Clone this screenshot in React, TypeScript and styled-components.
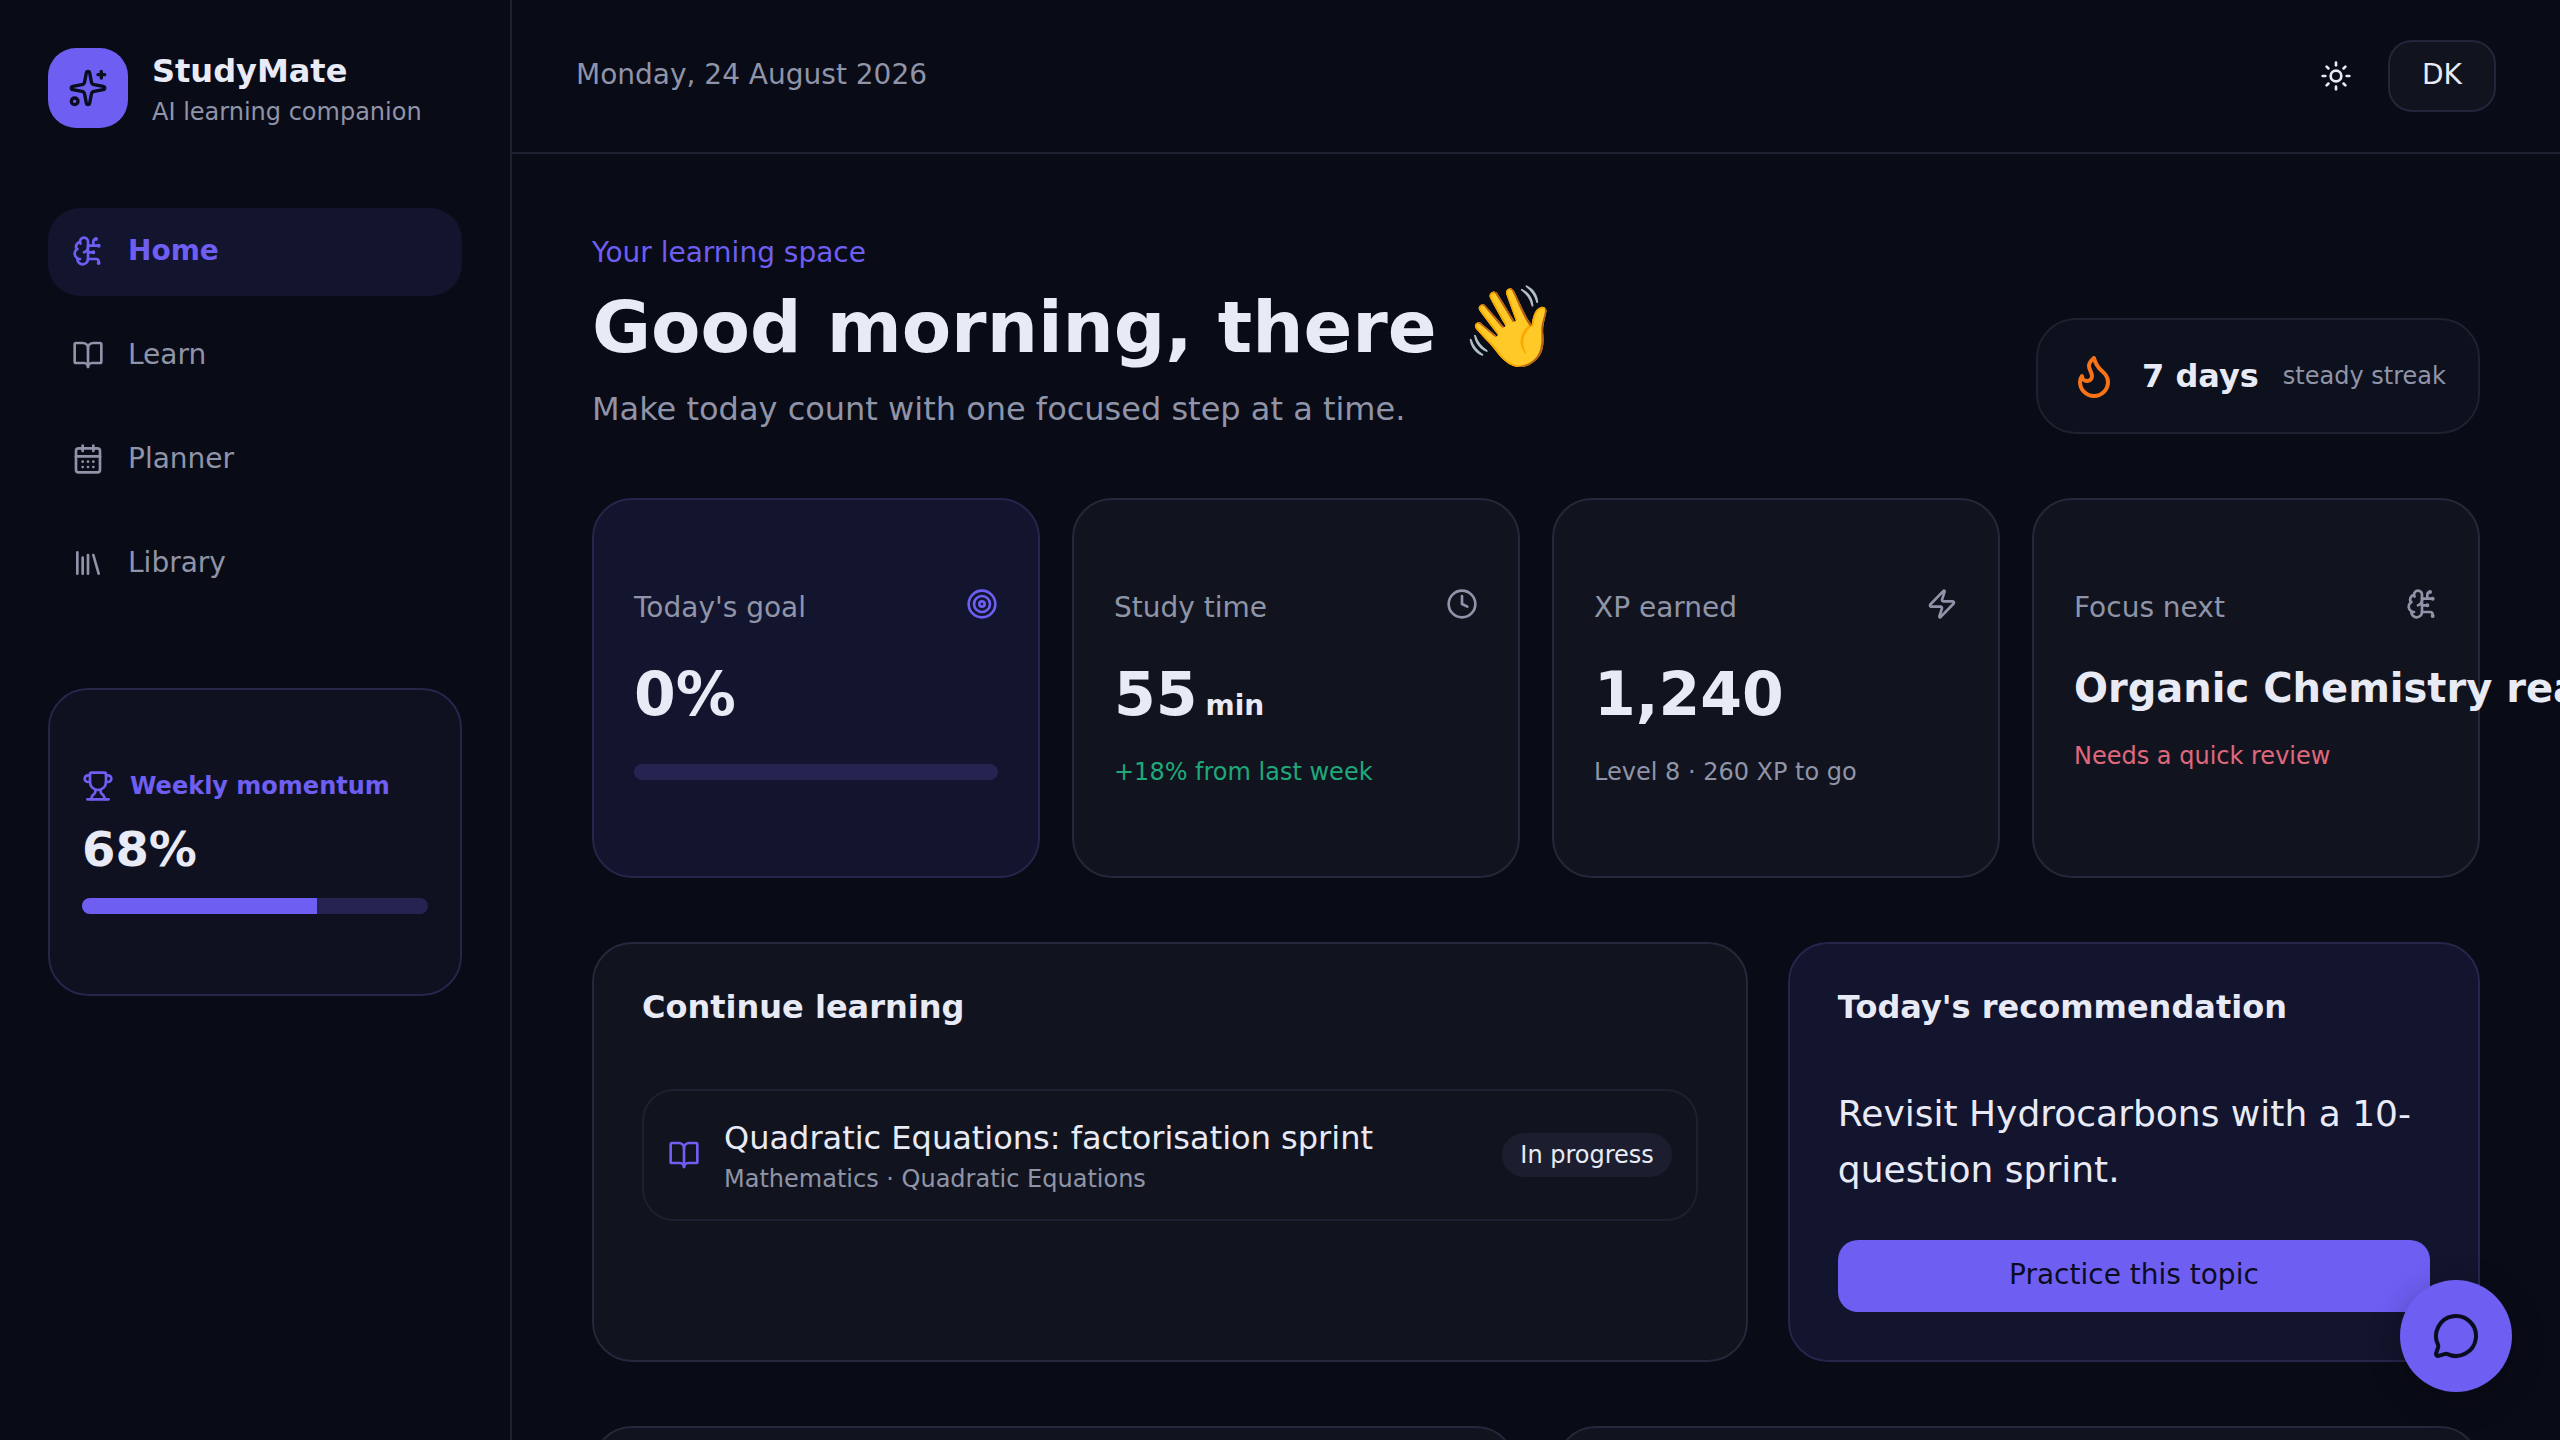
import { ReactNode } from 'react'
import styled, { createGlobalStyle } from 'styled-components'
import {
  BookOpen,
  BrainCircuit,
  CalendarDays,
  Clock,
  Flame,
  Library,
  MessageCircle,
  Sparkles,
  Sun,
  Target,
  Trophy,
  Zap
} from 'lucide-react'

const primary = '#6e5ef2'
const ink = '#e8eaf6'
const muted = '#9094a8'
const line = '#1e2130'
const cardBg = '#11141f'
const cardLine = '#25283a'
const accentBg = '#13142d'
const accentLine = '#25264a'

const GlobalStyle = createGlobalStyle`
  * { box-sizing: border-box; }
  html, body { margin: 0; height: 100%; background: #090b17; overflow: hidden; }
  body { font-family: 'DejaVu Sans', 'Noto Color Emoji', sans-serif; color: ${ink}; }
`

const Shell = styled.div`
  display: flex;
  width: 2560px;
  height: 1440px;
  overflow: hidden;
`

const Sidebar = styled.aside`
  flex: 0 0 512px;
  padding: 48px;
  border-right: 2px solid ${line};
  display: flex;
  flex-direction: column;
`

const Brand = styled.div`
  display: flex;
  align-items: center;
  gap: 24px;
  height: 80px;
  margin-bottom: 80px;
`

const LogoMark = styled.div`
  width: 80px;
  height: 80px;
  border-radius: 28px;
  background: ${primary};
  color: #0b0d1e;
  display: flex;
  align-items: center;
  justify-content: center;
`

const BrandText = styled.div`
  padding-top: 8px;
`

const BrandName = styled.div`
  font-size: 32px;
  font-weight: 700;
  line-height: 40px;
`

const BrandTag = styled.div`
  font-size: 24px;
  line-height: 43px;
  color: ${muted};
`

const Nav = styled.nav`
  display: flex;
  flex-direction: column;
  gap: 16px;
`

const NavItem = styled.div<{ $active?: boolean }>`
  height: 88px;
  padding: 0 24px 3px;
  display: flex;
  align-items: center;
  gap: 24px;
  border-radius: 32px;
  font-size: 28px;
  font-weight: ${({ $active }) => ($active ? 700 : 400)};
  color: ${({ $active }) => ($active ? primary : muted)};
  background: ${({ $active }) => ($active ? accentBg : 'transparent')};
`

const Momentum = styled.div`
  margin-top: 80px;
  height: 308px;
  padding: 80px 32px 0;
  border: 2px solid ${accentLine};
  border-radius: 40px;
  background: #0f1120;
`

const MomentumHead = styled.div`
  display: flex;
  align-items: center;
  gap: 16px;
  font-size: 24px;
  font-weight: 700;
  color: ${primary};
`

const MomentumValue = styled.div`
  font-size: 48px;
  font-weight: 700;
  line-height: 58px;
  margin: 18px 0 20px;
`

const Track = styled.div`
  height: 16px;
  border-radius: 8px;
  background: #252350;
  overflow: hidden;
`

const StatTrack = styled(Track)`
  margin-top: 34px;
`

const Fill = styled.div`
  height: 100%;
  background: ${primary};
`

const Main = styled.div`
  flex: 1;
  min-width: 0;
  display: flex;
  flex-direction: column;
`

const TopBar = styled.header`
  flex: 0 0 154px;
  padding: 40px 64px;
  border-bottom: 2px solid ${line};
  display: flex;
  align-items: center;
  justify-content: space-between;
`

const DateText = styled.div`
  font-size: 28px;
  padding-bottom: 3px;
  color: ${muted};
`

const TopActions = styled.div`
  display: flex;
  align-items: center;
  gap: 36px;
`

const ThemeButton = styled.div`
  display: flex;
  color: ${ink};
`

const Avatar = styled.div`
  width: 108px;
  height: 72px;
  padding-bottom: 3px;
  border-radius: 24px;
  border: 2px solid #23263a;
  background: ${cardBg};
  display: flex;
  align-items: center;
  justify-content: center;
  font-size: 28px;
`

const Content = styled.main`
  padding: 80px;
`

const Hero = styled.section`
  display: flex;
  align-items: flex-end;
  justify-content: space-between;
  margin-bottom: 64px;
`

const Eyebrow = styled.div`
  font-size: 28px;
  line-height: 38px;
  color: ${primary};
`

const Title = styled.h1`
  margin: 5px 0 8px;
  font-size: 72px;
  line-height: 100px;
  font-weight: 700;

  span {
    font-size: 79px;
    line-height: 0;
    vertical-align: -2px;
  }
`

const Subtitle = styled.p`
  margin: 0;
  font-size: 32px;
  line-height: 49px;
  color: ${muted};
`

const Streak = styled.div`
  width: 444px;
  height: 116px;
  padding: 0 32px;
  display: flex;
  align-items: center;
  border: 2px solid ${line};
  border-radius: 40px;
  background: #0d101d;
`

const StreakIcon = styled.div`
  display: flex;
  color: #f97316;
  margin-right: 24px;
`

const StreakDays = styled.div`
  font-size: 32px;
  font-weight: 700;
  margin-right: 24px;
`

const StreakNote = styled.div`
  font-size: 24px;
  color: ${muted};
`

const Stats = styled.section`
  display: grid;
  grid-template-columns: repeat(4, minmax(0, 1fr));
  gap: 32px;
  margin-bottom: 64px;
`

const StatCard = styled.div<{ $accent?: boolean }>`
  height: 380px;
  padding: 88px 40px 0;
  border: 2px solid ${({ $accent }) => ($accent ? accentLine : cardLine)};
  border-radius: 40px;
  background: ${({ $accent }) => ($accent ? accentBg : cardBg)};
`

const StatHead = styled.div<{ $accent?: boolean }>`
  display: flex;
  align-items: flex-start;
  justify-content: space-between;
  font-size: 28px;
  line-height: 40px;
  color: ${muted};
  margin-bottom: 30px;

  svg {
    color: ${({ $accent }) => ($accent ? primary : muted)};
  }
`

const StatValue = styled.div`
  font-size: 60px;
  font-weight: 700;
  line-height: 72px;
  margin-bottom: 25px;
  white-space: nowrap;

  small {
    font-size: 28px;
    line-height: 0;
    margin-left: 8px;
  }
`

const StatTitle = styled.div`
  font-size: 40px;
  font-weight: 700;
  line-height: 60px;
  margin-bottom: 21px;
  white-space: nowrap;
`

const StatNote = styled.div<{ $tone?: string }>`
  font-size: 24px;
  line-height: 34px;
  color: ${({ $tone }) => $tone || muted};
`

const Middle = styled.section`
  display: grid;
  grid-template-columns: 1.67fr 1fr;
  gap: 40px;
  margin-bottom: 64px;
`

const Panel = styled.div<{ $accent?: boolean }>`
  height: 420px;
  padding: 48px;
  border: 2px solid ${({ $accent }) => ($accent ? accentLine : cardLine)};
  border-radius: 40px;
  background: ${({ $accent }) => ($accent ? accentBg : cardBg)};
`

const PanelTitle = styled.h2`
  margin: 0;
  font-size: 32px;
  line-height: 30px;
  font-weight: 700;
`

const LessonRow = styled.div`
  margin-top: 67px;
  height: 132px;
  padding: 0 24px;
  display: flex;
  align-items: center;
  gap: 24px;
  border: 2px solid #1d2030;
  border-radius: 32px;

  svg {
    color: ${primary};
    flex: none;
  }
`

const LessonText = styled.div`
  flex: 1;
  padding-top: 3px;
`

const LessonName = styled.div`
  font-size: 32px;
  line-height: 42px;
`

const LessonMeta = styled.div`
  margin-top: 3px;
  font-size: 24px;
  line-height: 34px;
  color: ${muted};
`

const Badge = styled.div`
  height: 44px;
  padding: 0 18px;
  border-radius: 22px;
  background: #1c1e30;
  display: flex;
  align-items: center;
  font-size: 24px;
`

const Recommendation = styled.p`
  margin: 64px 0 42px;
  font-size: 36px;
  line-height: 56px;
`

const PrimaryButton = styled.div`
  height: 72px;
  padding-bottom: 3px;
  border-radius: 20px;
  background: ${primary};
  color: #0b0d1e;
  display: flex;
  align-items: center;
  justify-content: center;
  font-size: 28px;
`

const Lower = styled.section`
  display: grid;
  grid-template-columns: 1fr 1fr;
  gap: 40px;
`

const LowerCard = styled.div`
  height: 400px;
  border: 2px solid ${cardLine};
  border-radius: 40px;
  background: ${cardBg};
`

const Fab = styled.div`
  position: fixed;
  right: 48px;
  bottom: 48px;
  width: 112px;
  height: 112px;
  border-radius: 50%;
  background: ${primary};
  color: #0b0d1e;
  display: flex;
  align-items: center;
  justify-content: center;
  box-shadow: 0 8px 32px rgba(0, 0, 0, 0.25);
`

const navItems = [
  { label: 'Home', icon: BrainCircuit, active: true },
  { label: 'Learn', icon: BookOpen },
  { label: 'Planner', icon: CalendarDays },
  { label: 'Library', icon: Library }
]

const Stat = ({ label, icon, accent, children }: { label: string; icon: ReactNode; accent?: boolean; children: ReactNode }) => (
  <StatCard $accent={accent}>
    <StatHead $accent={accent}>
      {label}
      {icon}
    </StatHead>
    {children}
  </StatCard>
)

const App = () => (
  <Shell>
    <GlobalStyle />
    <Sidebar>
      <Brand>
        <LogoMark>
          <Sparkles size={40} />
        </LogoMark>
        <BrandText>
          <BrandName>StudyMate</BrandName>
          <BrandTag>AI learning companion</BrandTag>
        </BrandText>
      </Brand>
      <Nav>
        {navItems.map(({ label, icon: Icon, active }) => (
          <NavItem key={label} $active={active}>
            <Icon size={32} />
            {label}
          </NavItem>
        ))}
      </Nav>
      <Momentum>
        <MomentumHead>
          <Trophy size={32} />
          Weekly momentum
        </MomentumHead>
        <MomentumValue>68%</MomentumValue>
        <Track>
          <Fill style={{ width: '68%' }} />
        </Track>
      </Momentum>
    </Sidebar>
    <Main>
      <TopBar>
        <DateText>Monday, 24 August 2026</DateText>
        <TopActions>
          <ThemeButton>
            <Sun size={32} />
          </ThemeButton>
          <Avatar>DK</Avatar>
        </TopActions>
      </TopBar>
      <Content>
        <Hero>
          <div>
            <Eyebrow>Your learning space</Eyebrow>
            <Title>
              Good morning, there <span>👋</span>
            </Title>
            <Subtitle>Make today count with one focused step at a time.</Subtitle>
          </div>
          <Streak>
            <StreakIcon>
              <Flame size={48} />
            </StreakIcon>
            <StreakDays>7 days</StreakDays>
            <StreakNote>steady streak</StreakNote>
          </Streak>
        </Hero>
        <Stats>
          <Stat label="Today's goal" icon={<Target size={32} />} accent>
            <StatValue>0%</StatValue>
            <StatTrack>
              <Fill style={{ width: '0%' }} />
            </StatTrack>
          </Stat>
          <Stat label="Study time" icon={<Clock size={32} />}>
            <StatValue>
              55<small>min</small>
            </StatValue>
            <StatNote $tone="#1fa97a">+18% from last week</StatNote>
          </Stat>
          <Stat label="XP earned" icon={<Zap size={32} />}>
            <StatValue>1,240</StatValue>
            <StatNote>Level 8 · 260 XP to go</StatNote>
          </Stat>
          <Stat label="Focus next" icon={<BrainCircuit size={32} />}>
            <StatTitle>Organic Chemistry reactions</StatTitle>
            <StatNote $tone="#e0687c">Needs a quick review</StatNote>
          </Stat>
        </Stats>
        <Middle>
          <Panel>
            <PanelTitle>Continue learning</PanelTitle>
            <LessonRow>
              <BookOpen size={32} />
              <LessonText>
                <LessonName>Quadratic Equations: factorisation sprint</LessonName>
                <LessonMeta>Mathematics · Quadratic Equations</LessonMeta>
              </LessonText>
              <Badge>In progress</Badge>
            </LessonRow>
          </Panel>
          <Panel $accent>
            <PanelTitle>Today's recommendation</PanelTitle>
            <Recommendation>Revisit Hydrocarbons with a 10-question sprint.</Recommendation>
            <PrimaryButton>Practice this topic</PrimaryButton>
          </Panel>
        </Middle>
        <Lower>
          <LowerCard />
          <LowerCard />
        </Lower>
      </Content>
    </Main>
    <Fab>
      <MessageCircle size={48} />
    </Fab>
  </Shell>
)

export default App
